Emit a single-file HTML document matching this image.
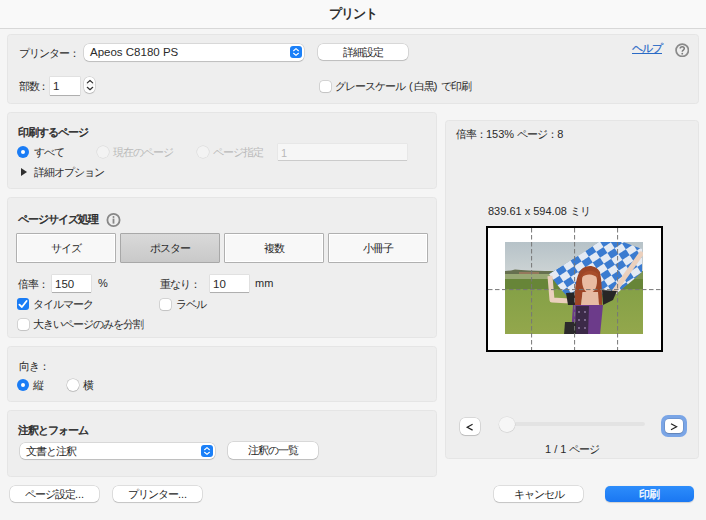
<!DOCTYPE html>
<html><head><meta charset="utf-8">
<style>
*{box-sizing:border-box;margin:0;padding:0}
html,body{width:706px;height:520px;overflow:hidden;background:#f5f5f5}
body{position:relative;font-family:"Liberation Sans",sans-serif;font-size:11px;color:#2a2a2a;letter-spacing:-1px}
.l{letter-spacing:0}
.a{position:absolute;white-space:nowrap}
.title{left:0;top:0;width:706px;height:29px;background:#f9f9f9;border-bottom:1px solid #d8d8d8}
.title span{position:absolute;left:329px;top:6px;font-size:12.5px;font-weight:bold;color:#303030}
.panel{position:absolute;background:#eeeeee;border:1px solid #e5e5e5;border-radius:3.5px}
.btn{position:absolute;background:#fff;border-radius:5px;box-shadow:0 0 0 0.5px rgba(0,0,0,.18),0 1px 1px rgba(0,0,0,.12);text-align:center;color:#262626}
.field{position:absolute;background:#fff;box-shadow:0 0 0 0.5px rgba(0,0,0,.10),0 1px 0.5px rgba(0,0,0,.22)}
.hd{font-weight:normal;-webkit-text-stroke:0.45px #2a2a2a}
.radio{position:absolute;width:12px;height:12px;border-radius:50%;background:#fff;box-shadow:0 0 0 0.5px rgba(0,0,0,.2),0 1px 1px rgba(0,0,0,.1)}
.radio.on{background:#1a7cf5;box-shadow:none}
.radio.on::after{content:"";position:absolute;left:4px;top:4px;width:4px;height:4px;border-radius:50%;background:#fff}
.radio.dis{background:#f3f3f3;box-shadow:0 0 0 0.5px rgba(0,0,0,.1)}
.cb{position:absolute;width:12px;height:12px;border-radius:3px;background:#fff;box-shadow:0 0 0 0.5px rgba(0,0,0,.22),0 1px 1px rgba(0,0,0,.08)}
.cb.on{background:#1a7cf5;box-shadow:none}
.dis{color:#b9b9b9}
.seg{position:absolute;top:233px;width:100px;height:30px;background:#f8f8f8;border:1px solid #b0b0b0;border-radius:1px;box-shadow:inset 0 0 0 1px #fff;text-align:center;line-height:28px;color:#262626}
.seg.sel{background:linear-gradient(#d9d9d9,#c9c9c9);border-color:#a8a8a8;box-shadow:none}
.stepblue{position:absolute;width:12px;height:12px;border-radius:3px;background:#1b80f8}
</style></head>
<body>
<div class="a title"><span>プリント</span></div>

<!-- panel 1 -->
<div class="panel" style="left:7px;top:34px;width:692px;height:70px"></div>
<div class="a" style="left:19px;top:46px">プリンター：</div>
<div class="btn" style="left:84px;top:44px;width:220px;height:17px"></div>
<div class="a l" style="left:90px;top:46px;font-size:11.5px">Apeos C8180 PS</div>
<svg class="stepblue" style="left:290px;top:46px" viewBox="0 0 12 12"><path d="M3.6 4.7 L6 2.6 L8.4 4.7 M3.6 7.3 L6 9.4 L8.4 7.3" fill="none" stroke="#fff" stroke-width="1.15" stroke-linecap="round" stroke-linejoin="round"/></svg>
<div class="btn" style="left:318px;top:43.5px;width:89.5px;height:16.5px;line-height:17.5px">詳細設定</div>
<div class="a" style="left:632px;top:40.5px;color:#2a6ac6;text-decoration:underline;-webkit-text-stroke:0.2px #2a6ac6">ヘルプ</div>
<svg class="a" style="left:674.5px;top:42.5px" width="14.5" height="14.5" viewBox="0 0 14.5 14.5"><circle cx="7.25" cy="7.25" r="6.2" fill="none" stroke="#8a8a8a" stroke-width="1.7"/><path d="M5.2 5.6 C5.2 3.2 9.3 3.2 9.3 5.6 C9.3 7.1 7.25 7 7.25 8.8" fill="none" stroke="#7c7c7c" stroke-width="1.5"/><circle cx="7.25" cy="10.7" r="0.9" fill="#7c7c7c"/></svg>
<div class="a" style="left:18.5px;top:79px;letter-spacing:-0.6px">部数</div><div class="a" style="left:38px;top:79px">：</div>
<div class="field" style="left:50px;top:77px;width:30px;height:18px"></div>
<div class="a l" style="left:53px;top:80px;font-size:11.5px">1</div>
<div class="btn" style="left:83.5px;top:77px;width:11.5px;height:16px;border-radius:5px"></div><svg class="a" style="left:83.5px;top:77px" width="12" height="16" viewBox="0 0 12 16"><path d="M3.3 5.9 L6 3.5 L8.7 5.9 M3.3 10.3 L6 12.7 L8.7 10.3" fill="none" stroke="#333" stroke-width="1.25" stroke-linecap="round" stroke-linejoin="round"/><line x1="1" y1="7.9" x2="11" y2="7.9" stroke="#e6e6e6" stroke-width="0.6"/></svg>
<div class="cb" style="left:319.5px;top:80.5px;width:11px;height:11px"></div>
<div class="a" style="left:335px;top:79px">グレースケール<span class="l" style="letter-spacing:1px"> (</span>白黒<span class="l" style="letter-spacing:0.3px">) </span>で印刷</div>

<!-- panel 2 -->
<div class="panel" style="left:7px;top:112px;width:430px;height:76.5px"></div>
<div class="a hd" style="left:18px;top:125px">印刷するページ</div>
<div class="radio on" style="left:17px;top:146px"></div>
<div class="a" style="left:34px;top:145px">すべて</div>
<div class="radio dis" style="left:97px;top:146px"></div>
<div class="a dis" style="left:113px;top:145px">現在のページ</div>
<div class="radio dis" style="left:197px;top:146px"></div>
<div class="a dis" style="left:213px;top:145px">ページ指定</div>
<div class="field" style="left:278px;top:144px;width:129px;height:16px;background:#f6f6f6;box-shadow:0 0 0 0.5px rgba(0,0,0,.06),0 1px 0.5px rgba(0,0,0,.12)"></div>
<div class="a dis l" style="left:281px;top:147px">1</div>
<div class="a" style="left:21px;top:168px;width:0;height:0;border-left:6px solid #303030;border-top:4px solid transparent;border-bottom:4px solid transparent"></div>
<div class="a" style="left:34px;top:165px">詳細オプション</div>

<!-- panel 3 -->
<div class="panel" style="left:7px;top:197px;width:430px;height:140.5px"></div>
<div class="a hd" style="left:18px;top:212px">ページサイズ処理</div>
<svg class="a" style="left:106px;top:213px" width="15" height="15" viewBox="0 0 15 15"><circle cx="7.5" cy="7" r="6.1" fill="none" stroke="#878787" stroke-width="1.8"/><circle cx="7.5" cy="4" r="1" fill="#878787"/><rect x="6.6" y="5.6" width="1.8" height="5" fill="#878787"/></svg>
<div class="seg" style="left:16px">サイズ</div>
<div class="seg sel" style="left:120px">ポスター</div>
<div class="seg" style="left:224px">複数</div>
<div class="seg" style="left:328px">小冊子</div>
<div class="a" style="left:18px;top:277px">倍率：</div>
<div class="field" style="left:51.5px;top:274.5px;width:39.5px;height:17px"></div>
<div class="a l" style="left:55px;top:277.5px;font-size:11.5px">150</div>
<div class="a l" style="left:98px;top:277px">%</div>
<div class="a" style="left:160px;top:277px">重なり：</div>
<div class="field" style="left:209.5px;top:274.5px;width:39.5px;height:17px"></div>
<div class="a l" style="left:213px;top:277.5px;font-size:11.5px">10</div>
<div class="a l" style="left:255px;top:277px">mm</div>
<svg class="cb on" style="left:17px;top:298px" viewBox="0 0 12 12"><path d="M2.4 6.6 L4.9 9 L9.6 3" fill="none" stroke="#fff" stroke-width="1.8" stroke-linecap="round" stroke-linejoin="round"/></svg>
<div class="a" style="left:33px;top:297px">タイルマーク</div>
<div class="cb" style="left:159.5px;top:299px;width:11px;height:11px"></div>
<div class="a" style="left:176px;top:297px">ラベル</div>
<div class="cb" style="left:17.5px;top:318.5px;width:11px;height:11px"></div>
<div class="a" style="left:33px;top:317px">大きいページのみを分割</div>

<!-- panel 4 -->
<div class="panel" style="left:7px;top:346px;width:430px;height:56px"></div>
<div class="a" style="left:19px;top:359px">向き：</div>
<div class="radio on" style="left:17px;top:379px"></div>
<div class="a" style="left:32.5px;top:378px">縦</div>
<div class="radio" style="left:67.2px;top:379.2px;width:11.6px;height:11.6px"></div>
<div class="a" style="left:83px;top:378px">横</div>

<!-- panel 5 -->
<div class="panel" style="left:7px;top:410px;width:430px;height:67px"></div>
<div class="a hd" style="left:18px;top:423px">注釈とフォーム</div>
<div class="btn" style="left:20px;top:442.5px;width:195px;height:16.5px"></div>
<div class="a" style="left:26px;top:444px">文書と注釈</div>
<svg class="stepblue" style="left:201px;top:445px" viewBox="0 0 12 12"><path d="M3.6 4.7 L6 2.6 L8.4 4.7 M3.6 7.3 L6 9.4 L8.4 7.3" fill="none" stroke="#fff" stroke-width="1.15" stroke-linecap="round" stroke-linejoin="round"/></svg>
<div class="btn" style="left:228px;top:442px;width:90px;height:17px;line-height:17px">注釈の一覧</div>

<!-- bottom buttons -->
<div class="btn" style="left:10px;top:486px;width:89px;height:16px;line-height:16px">ページ設定<span class="l">...</span></div>
<div class="btn" style="left:113px;top:486px;width:89px;height:16px;line-height:16px">プリンター<span class="l">...</span></div>
<div class="btn" style="left:494px;top:486px;width:89px;height:16px;line-height:16px">キャンセル</div>
<div class="btn" style="left:605px;top:486px;width:89px;height:16px;line-height:16px;background:linear-gradient(#2d8dfb,#1a77f2);color:#fff;box-shadow:0 0.5px 1px rgba(0,0,0,.15);text-indent:-2px;-webkit-text-stroke:0.3px #fff">印刷</div>

<!-- right panel -->
<div class="panel" style="left:445px;top:120px;width:254px;height:339px"></div>
<div class="a" style="left:456px;top:127px">倍率：<span class="l">153% </span>ページ：<span class="l">8</span></div>
<div class="a" style="left:488px;top:204px"><span class="l">839.61 x 594.08 </span>ミリ</div>
<div class="a" style="left:486px;top:226px;width:177px;height:126px;background:#fff;border:2px solid #000"></div>
<svg class="a" style="left:505px;top:242px" width="138" height="92" viewBox="0 0 138 92">
<defs>
<linearGradient id="sky" x1="0" y1="0" x2="0" y2="1"><stop offset="0" stop-color="#b6c2c8"/><stop offset="1" stop-color="#cbd2d3"/></linearGradient>
<linearGradient id="grass" x1="0" y1="0" x2="0" y2="1"><stop offset="0" stop-color="#6c8a3a"/><stop offset="0.45" stop-color="#83a046"/><stop offset="1" stop-color="#93a74c"/></linearGradient>
<pattern id="chk" width="10" height="10" patternUnits="userSpaceOnUse" patternTransform="translate(2 1) rotate(-33) scale(1.75 1.4)">
<rect width="10" height="10" fill="#e4eaf3"/><rect width="5" height="5" fill="#3a7bd0"/><rect x="5" y="5" width="5" height="5" fill="#3a7bd0"/>
</pattern>
</defs>
<rect width="138" height="92" fill="url(#grass)"/>
<rect width="138" height="29" fill="url(#sky)"/>
<path d="M0 29 L6 28.5 L10 27.5 L16 28 L24 28.5 L40 29 L60 29.5 L60 32 L0 32 Z" fill="#66704f"/>
<rect x="14" y="30" width="20" height="3" fill="#94785c"/>
<rect x="0" y="32" width="60" height="5" fill="#98a874"/>
<rect x="0" y="37" width="138" height="10" fill="#678538"/>
<path d="M112 30 L138 29 L138 37 L112 37 Z" fill="#7d9452"/>
<path d="M44 32 C60 22 80 10 94 0 L118 0 C126 3 132 5 137 7 L137 30 L128 38 L111 52 L62 54 C56 48 50 40 44 32 Z" fill="url(#chk)"/>
<path d="M45 34 L47 58 L65 59" fill="none" stroke="#ebd0bd" stroke-width="5" stroke-linejoin="round"/>
<path d="M106 54 L136 12" fill="none" stroke="#ebd0bd" stroke-width="5" stroke-linecap="round"/>
<path d="M61 51 L74 50 L75 63 L63 63 Z" fill="#262626"/>
<path d="M97 48 L112 49 L108 58 L98 63 Z" fill="#262626"/>
<path d="M70 63 C69 50 71 30 78 26 C84 22 92 24 95 30 C97 40 97 52 97 63 L92 62 L92 50 L78 50 L76 63 Z" fill="#9c4526"/>
<path d="M77.5 50 L93 50 L94 63 L76 63 Z" fill="#e6bca4"/>
<path d="M77 38 C77 33 80 31 85 31 C90 31 92 34 92 39 C92 46 89 51 84.5 51 C80 51 77 45 77 38 Z" fill="#e9bba2"/>
<path d="M76 36 C78 29 86 26 93 32 L93 36 C88 32 82 31 76 36 Z" fill="#a84c2a"/>
<path d="M68 63 L98 63 L95 93 L66 93 Z" fill="#6c3b8a"/>
<path d="M71 64 L84 64 L83 93 L70 93 Z" fill="#3c2a48"/>
<circle cx="74" cy="70" r="0.9" fill="#9a86ae"/><circle cx="80" cy="70" r="0.9" fill="#9a86ae"/><circle cx="74" cy="78" r="0.9" fill="#9a86ae"/><circle cx="80" cy="78" r="0.9" fill="#9a86ae"/><circle cx="74" cy="86" r="0.9" fill="#9a86ae"/><circle cx="80" cy="86" r="0.9" fill="#9a86ae"/>
<path d="M60 80 L71 80 L71 93 L59 93 Z" fill="#2c2a2c"/>
</svg>
<svg class="a" style="left:486px;top:226px" width="177" height="126">
<g stroke="#777" stroke-width="1" stroke-dasharray="4.5 2.5">
<line x1="45.6" y1="2" x2="45.6" y2="124"/>
<line x1="88.6" y1="2" x2="88.6" y2="124"/>
<line x1="131.6" y1="2" x2="131.6" y2="124"/>
<line x1="2" y1="63.6" x2="175" y2="63.6"/>
</g></svg>

<div class="btn" style="left:460px;top:417.5px;width:20px;height:17px"></div><svg class="a" style="left:460px;top:417.5px" width="20" height="17" viewBox="0 0 20 17"><path d="M12.6 6.3 L7.2 9.2 L12.6 12.1" fill="none" stroke="#222" stroke-width="1.2" stroke-linejoin="miter"/></svg>
<div class="a" style="left:500px;top:422px;width:145px;height:4px;border-radius:2px;background:#e3e3e3"></div>
<div class="a" style="left:499px;top:416.5px;width:15.5px;height:15.5px;border-radius:50%;background:#f6f6f6;box-shadow:0 0 0 0.5px rgba(0,0,0,.08),0 0.5px 1px rgba(0,0,0,.08)"></div>
<div class="a" style="left:661px;top:415px;width:26px;height:22px;border-radius:7px;background:#7aa5e6"></div>
<div class="btn" style="left:665px;top:419px;width:18px;height:14px;border-radius:4px"></div><svg class="a" style="left:665px;top:419px" width="18" height="14" viewBox="0 0 18 14"><path d="M6 4.8 L11.6 7.8 L6 10.8" fill="none" stroke="#222" stroke-width="1.2"/></svg>
<div class="a" style="left:545px;top:442px"><span class="l">1 / 1 </span>ページ</div>
</body></html>
